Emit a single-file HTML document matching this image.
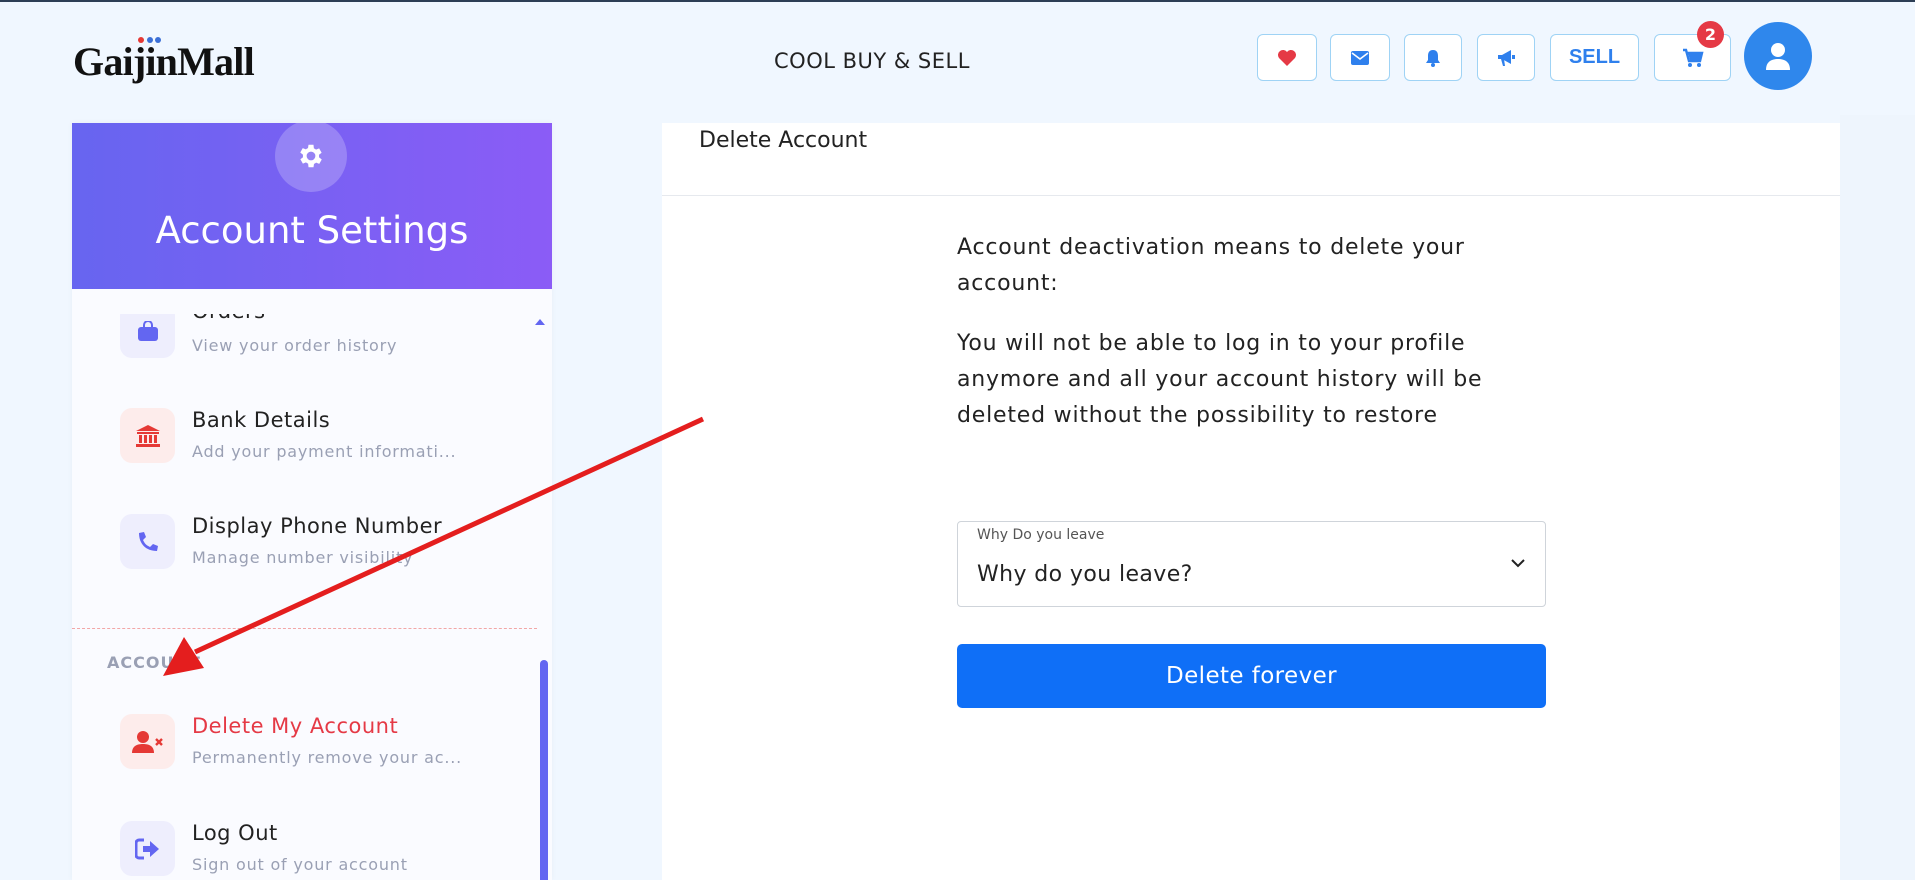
<!DOCTYPE html>
<html><head><meta charset="utf-8"><style>
*{box-sizing:border-box;margin:0;padding:0}
body{width:1915px;height:880px;overflow:hidden;background:#f0f7ff;font-family:"DejaVu Sans","Liberation Sans",sans-serif;position:relative;color:#222}
.topline{position:absolute;left:0;top:0;width:1915px;height:2px;background:#2c3e55}
.abs{position:absolute}
.logo{left:73px;top:38px;font-family:"Liberation Serif",serif;font-weight:bold;font-size:40px;color:#111;letter-spacing:-0.8px}
.tag{left:774px;top:49px;font-size:21px;color:#222;letter-spacing:0.5px}
.btn{position:absolute;top:34px;height:47px;border:1px solid #9fd3f5;border-radius:6px;background:#fff;display:flex;align-items:center;justify-content:center;color:#2f80ed;font-size:19px}
.side{left:72px;top:123px;width:480px;height:757px;background:#fafbff;overflow:hidden;box-shadow:0 0 6px rgba(0,0,0,.04)}
.shead{position:absolute;left:0;top:0;width:480px;height:166px;background:linear-gradient(90deg,#6765f0,#8b5cf6);z-index:2}
.gear{position:absolute;left:203px;top:-3px;width:72px;height:72px;border-radius:50%;background:rgba(255,255,255,.22);display:flex;align-items:center;justify-content:center}
.stitle{position:absolute;left:0;width:480px;top:86px;text-align:center;color:#fff;font-size:37px}
.item{position:absolute;left:48px}
.ib{position:absolute;left:0;width:55px;height:55px;border-radius:12px;display:flex;align-items:center;justify-content:center}
.it{position:absolute;left:72px;font-size:21px;color:#222;white-space:nowrap;letter-spacing:0.5px}
.is{position:absolute;left:72px;font-size:16px;color:#9aa0b4;white-space:nowrap;letter-spacing:0.8px}
.main{left:662px;top:123px;width:1178px;height:757px;background:#fff}
p.t{position:absolute;left:295px;font-size:22px;line-height:36px;color:#222;letter-spacing:0.8px;white-space:nowrap}
</style></head><body>
<div class="topline"></div>
<div class="abs logo">GaijinMall</div>
<div class="abs" style="left:138px;top:37px;width:6px;height:6px;border-radius:50%;background:#e53935"></div>
<div class="abs" style="left:147px;top:37px;width:6px;height:6px;border-radius:50%;background:#3b6fd6"></div>
<div class="abs" style="left:155px;top:37px;width:6px;height:6px;border-radius:50%;background:#3b6fd6"></div>
<div class="abs tag">COOL BUY &amp; SELL</div>

<div class="btn" style="left:1257px;width:60px"><svg width="20" height="18" viewBox="0 0 20 18"><path d="M10 17L2 9A5 5 0 0 1 10 3A5 5 0 0 1 18 9Z" fill="#e53945"/></svg></div>
<div class="btn" style="left:1330px;width:60px"><svg width="18" height="14" viewBox="0 0 18 14"><rect x="0" y="0" width="18" height="14" rx="2" fill="#2f80ed"/><path d="M1 2L9 8L17 2" stroke="#fff" stroke-width="1.6" fill="none"/></svg></div>
<div class="btn" style="left:1404px;width:58px"><svg width="16" height="18" viewBox="0 0 16 18"><path d="M8 1C4 1 3 4 3 7V11L1 14H15L13 11V7C13 4 12 1 8 1Z" fill="#2f80ed"/><circle cx="8" cy="16" r="2" fill="#2f80ed"/></svg></div>
<div class="btn" style="left:1477px;width:58px"><svg width="20" height="18" viewBox="0 0 20 18"><path d="M2 6H6L15 1V15L6 10H2Z" fill="#2f80ed"/><path d="M5 10L7 17H9L8 10Z" fill="#2f80ed"/><rect x="16" y="6" width="3" height="4" fill="#2f80ed"/></svg></div>
<div class="btn" style="left:1550px;width:89px;font-weight:bold;font-family:'Liberation Sans',sans-serif;font-size:20px">SELL</div>
<div class="btn" style="left:1654px;width:77px"><svg width="22" height="20" viewBox="0 0 22 20"><path d="M1 2H4L7 13H18L20 5H5" stroke="#2f80ed" stroke-width="2.4" fill="none"/><path d="M6 5H20L18 12H8Z" fill="#2f80ed"/><circle cx="8" cy="17" r="2" fill="#2f80ed"/><circle cx="17" cy="17" r="2" fill="#2f80ed"/></svg></div>
<div class="abs" style="left:1697px;top:21px;width:27px;height:27px;border-radius:50%;background:#e53945;color:#fff;font-size:16px;font-weight:bold;text-align:center;line-height:27px">2</div>
<div class="abs" style="left:1744px;top:22px;width:68px;height:68px;border-radius:50%;background:#2f87ec;display:flex;align-items:center;justify-content:center"><svg width="26" height="28" viewBox="0 0 26 28"><circle cx="13" cy="8" r="7" fill="#fff"/><path d="M1 28C1 20 6 17 13 17C20 17 25 20 25 28Z" fill="#fff"/></svg></div>

<div class="abs" style="left:1840px;top:115px;width:75px;height:765px;background:#eef5fd"></div>

<div class="abs side">
  <div class="shead">
    <div class="gear"><svg width="30" height="30" viewBox="0 0 24 24"><path fill="#fff" d="M19.4 13a7.5 7.5 0 0 0 0-2l2.1-1.6-2-3.5-2.5 1a7 7 0 0 0-1.7-1L15 3h-4l-.4 2.7a7 7 0 0 0-1.7 1l-2.5-1-2 3.5L6.6 11a7.5 7.5 0 0 0 0 2l-2.1 1.6 2 3.5 2.5-1a7 7 0 0 0 1.7 1L11 21h4l.4-2.7a7 7 0 0 0 1.7-1l2.5 1 2-3.5zM13 15.5a3.5 3.5 0 1 1 0-7 3.5 3.5 0 0 1 0 7z" transform="translate(-1 0)"/></svg></div>
    <div class="stitle">Account Settings</div>
  </div>
  <div class="abs" style="left:0;top:166px;width:460px;height:25px;background:#fafbff;z-index:1"></div>
  <div class="item" style="top:180px">
    <div class="ib" style="top:0;background:#eeeefd"><svg width="22" height="20" viewBox="0 0 22 20"><path d="M7 6V4a4 4 0 0 1 8 0v2" stroke="#6366f1" stroke-width="2" fill="none"/><rect x="1" y="6" width="20" height="14" rx="3" fill="#6366f1"/></svg></div>
    <div class="it" style="top:-4px">Orders</div>
    <div class="is" style="top:33px">View your order history</div>
  </div>
  <div class="abs" style="left:463px;top:196px;width:0;height:0;border-left:5px solid transparent;border-right:5px solid transparent;border-bottom:6px solid #6366f1;z-index:2"></div>
  <div class="item" style="top:285px">
    <div class="ib" style="top:0;background:#fdeceb"><svg width="26" height="24" viewBox="0 0 26 24"><path d="M13 1L1 7H25Z" fill="#e53935"/><rect x="2" y="8" width="22" height="2" fill="#e53935"/><rect x="4" y="11" width="3" height="8" fill="#e53935"/><rect x="9" y="11" width="3" height="8" fill="#e53935"/><rect x="14" y="11" width="3" height="8" fill="#e53935"/><rect x="19" y="11" width="3" height="8" fill="#e53935"/><rect x="1" y="20" width="24" height="3" fill="#e53935"/></svg></div>
    <div class="it" style="top:0">Bank Details</div>
    <div class="is" style="top:34px">Add your payment informati...</div>
  </div>
  <div class="item" style="top:391px">
    <div class="ib" style="top:0;background:#eeeefd"><svg width="24" height="24" viewBox="0 0 24 24"><path d="M22 16l-5-2-3 3C10 15 9 14 7 10l3-3-2-5-5 1C3 14 10 21 21 21Z" fill="#6366f1"/></svg></div>
    <div class="it" style="top:0">Display Phone Number</div>
    <div class="is" style="top:34px">Manage number visibility</div>
  </div>
  <div class="abs" style="left:0;top:505px;width:465px;border-top:1px dashed #f2a7a7"></div>
  <div class="abs" style="left:35px;top:530px;font-size:16px;font-weight:bold;color:#9aa0b4;letter-spacing:1px">ACCOUNT</div>
  <div class="item" style="top:591px">
    <div class="ib" style="top:0;background:#fdeceb"><svg width="32" height="24" viewBox="0 0 32 24"><circle cx="11" cy="7" r="6" fill="#e53935"/><path d="M0 23C0 16 5 14 11 14C17 14 22 16 22 23Z" fill="#e53935"/><path d="M24 9L30 15M30 9L24 15" stroke="#e53935" stroke-width="2.4"/></svg></div>
    <div class="it" style="top:0;color:#e53945">Delete My Account</div>
    <div class="is" style="top:34px">Permanently remove your ac...</div>
  </div>
  <div class="item" style="top:698px">
    <div class="ib" style="top:0;background:#eeeefd"><svg width="26" height="22" viewBox="0 0 26 22"><path d="M9 2H4a3 3 0 0 0-3 3v12a3 3 0 0 0 3 3h5" stroke="#6366f1" stroke-width="3" fill="none"/><path d="M8 8H15V3L24 11L15 19V14H8Z" fill="#6366f1"/></svg></div>
    <div class="it" style="top:0">Log Out</div>
    <div class="is" style="top:34px">Sign out of your account</div>
  </div>
  <div class="abs" style="left:468px;top:537px;width:8px;height:230px;border-radius:4px;background:#6366f1"></div>
</div>

<div class="abs main">
  <div class="abs" style="left:37px;top:5px;font-size:22px;color:#222">Delete Account</div>
  <div class="abs" style="left:0;top:72px;width:1178px;border-top:1px solid #e6e9ee"></div>
  <p class="t" style="top:107px">Account deactivation means to delete your<br>account:</p>
  <p class="t" style="top:203px">You will not be able to log in to your profile<br>anymore and all your account history will be<br>deleted without the possibility to restore</p>
  <div class="abs" style="left:295px;top:398px;width:589px;height:86px;border:1px solid #cfd4da;border-radius:4px">
    <div class="abs" style="left:19px;top:5px;font-size:14px;color:#555">Why Do you leave</div>
    <div class="abs" style="left:19px;top:40px;font-size:22px;color:#222;letter-spacing:0.4px">Why do you leave?</div>
    <svg class="abs" style="left:552px;top:36px" width="16" height="10" viewBox="0 0 16 10"><path d="M2 2L8 8L14 2" stroke="#222" stroke-width="2" fill="none"/></svg>
  </div>
  <div class="abs" style="left:295px;top:521px;width:589px;height:64px;background:#0f6ff7;border-radius:5px;color:#fff;font-size:23px;text-align:center;line-height:64px;letter-spacing:0.4px">Delete forever</div>
</div>

<svg class="abs" style="left:0;top:0;z-index:5" width="1915" height="880"><line x1="703" y1="419" x2="195" y2="652" stroke="#e41e1e" stroke-width="5"/><path d="M163 676L184 637L204 668Z" fill="#e41e1e"/></svg>
</body></html>
